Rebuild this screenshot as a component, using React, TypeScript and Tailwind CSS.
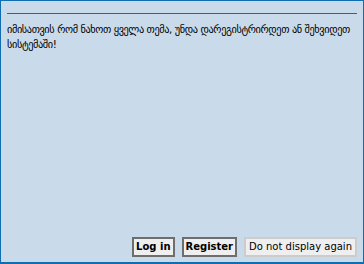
import React from "react";

export default function App() {
  return (
    <div
      className="w-[364px] h-[264px] bg-[#c9dbeb] border border-b-2 border-[#0f6db0] flex flex-col px-[6px] pt-[12px] pb-[5px]"
      style={{ fontFamily: '"DejaVu Sans", Verdana, sans-serif' }}
    >
      <div className="h-px bg-[#0f6db0] w-full" />
      <p className="mt-[8px] text-[10.3px] tracking-[-0.4px] leading-[15px] text-black">
        იმისათვის რომ ნახოთ ყველა თემა, უნდა დარეგისტრირდეთ ან შეხვიდეთ სისტემაში!
      </p>
      <div className="mt-auto flex justify-end gap-[7px]">
        <button className="h-[20px] px-[2px] bg-[#efefef] border-2 border-[#6e6e6e] text-[10px] font-bold text-black leading-none">
          Log in
        </button>
        <button className="h-[20px] px-[2px] bg-[#efefef] border-2 border-[#6e6e6e] text-[10px] font-bold text-black leading-none">
          Register
        </button>
        <button className="h-[20px] px-[3px] bg-[#efefef] border-2 border-[#cccccc] text-[10px] text-black leading-none">
          Do not display again
        </button>
      </div>
    </div>
  );
}
